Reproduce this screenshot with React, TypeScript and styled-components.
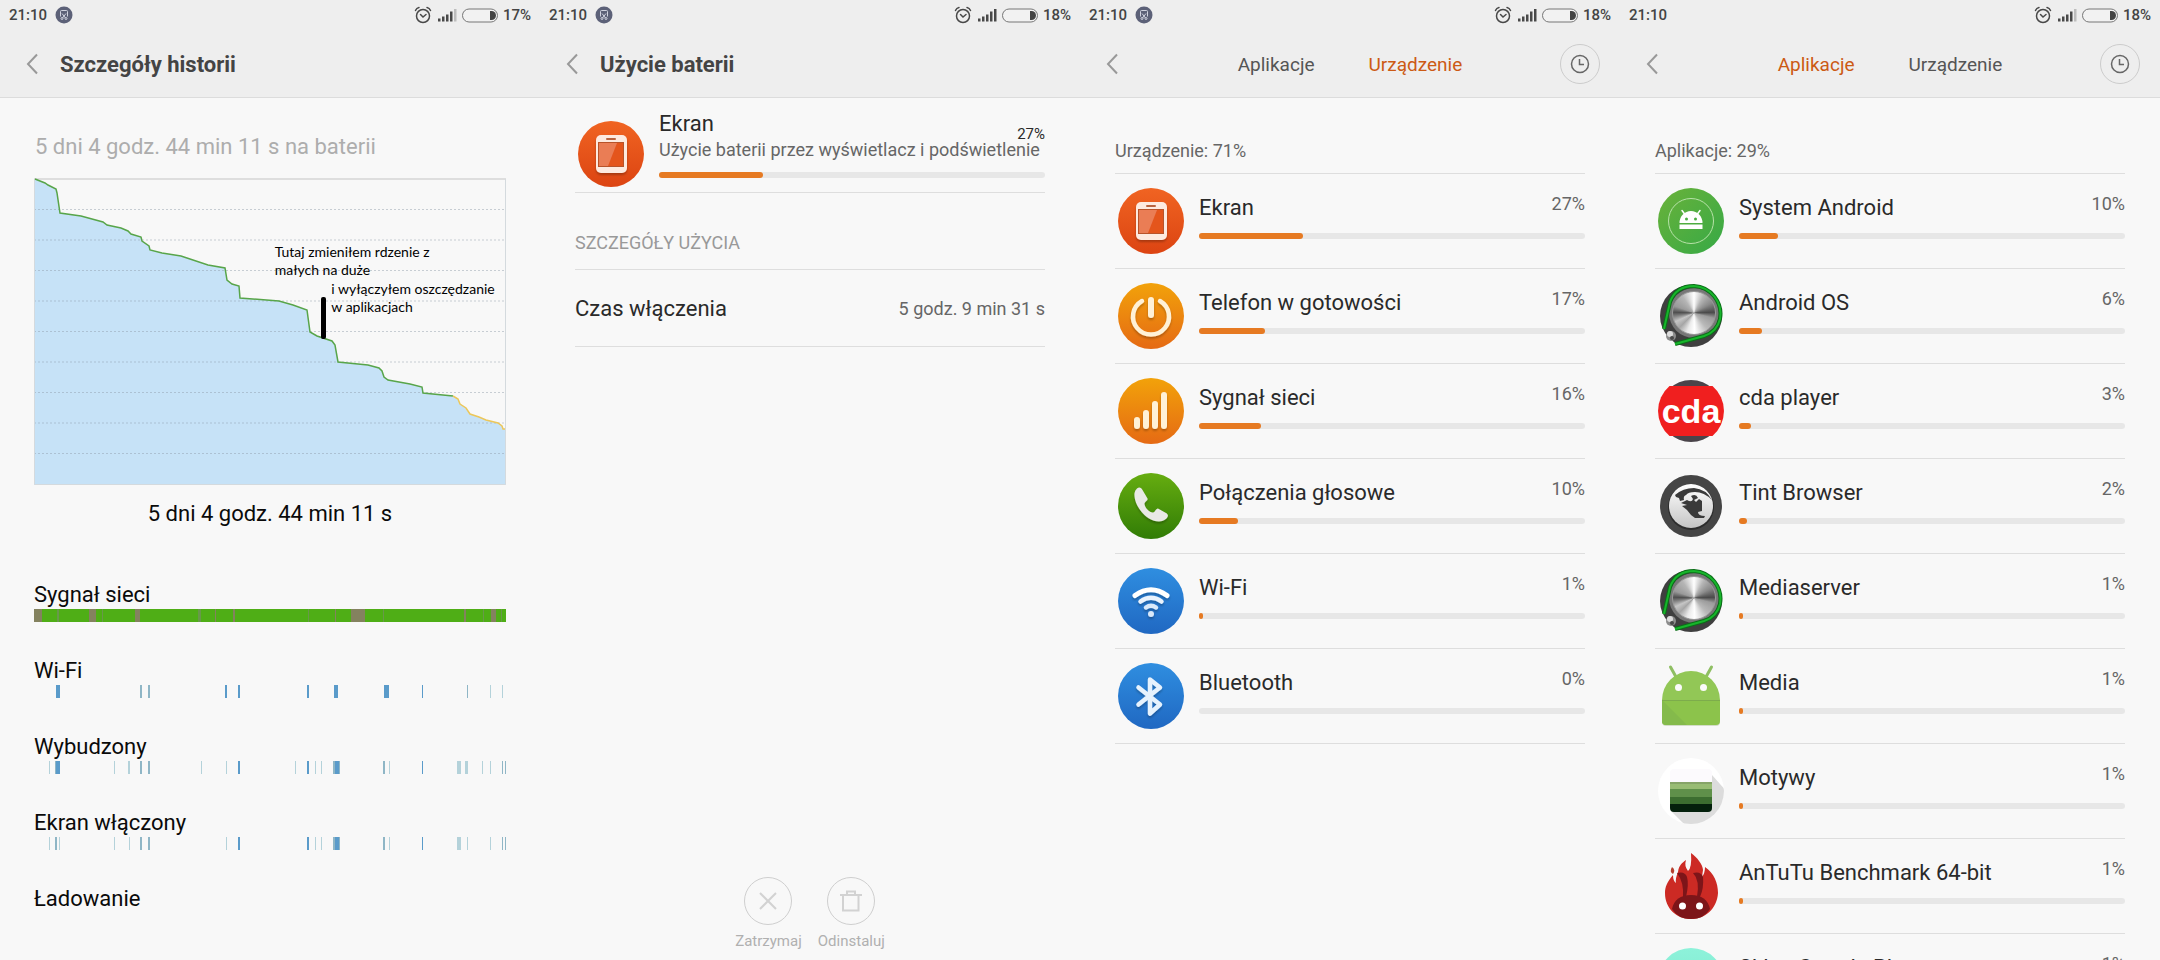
import React from "react";
import styled, { createGlobalStyle } from "styled-components";

const GlobalStyle = createGlobalStyle`
  *, *::before, *::after { box-sizing: border-box; }
  body {
    margin: 0;
    background: #f8f8f8;
    font-family: Roboto, "Noto Sans", sans-serif;
    color: #2a2a2a;
  }
  h1, h2, h3, p, ul, dl, dd, dt, figure { margin: 0; padding: 0; font-weight: 400; }
  button { font: inherit; color: inherit; background: none; border: 0; padding: 0; margin: 0; }
`;

/* ---------- layout ---------- */

const Board = styled.main`
  display: grid;
  grid-template-columns: repeat(4, minmax(0, 1fr));
  height: 100vh;
  overflow: hidden;
`;

const Screen = styled.section`
  display: flex;
  flex-direction: column;
  min-width: 0;
  min-height: 0;
  overflow: hidden;
  background: #f8f8f8;
`;

const Header = styled.header`
  flex: none;
  background: #eeeeee;
  border-bottom: 1px solid #dcdcdc;
`;

const StatusBar = styled.div`
  display: flex;
  align-items: center;
  height: 30px;
  padding: 0 9px;
  font-size: 15px;
  font-weight: 500;
  line-height: 20px;
  color: #444;
`;

const Clock = styled.time`
  margin-right: 8px;
`;

const StatusIcons = styled.div`
  display: flex;
  align-items: center;
  gap: 5px;
  margin-left: auto;
`;

const TitleBar = styled.div`
  display: flex;
  align-items: center;
  height: 67px;
  padding: 0 20px;
`;

const BackButton = styled.button`
  flex: none;
  display: flex;
  width: 24px;
  height: 24px;
`;

const Title = styled.h1`
  margin-left: 16px;
  padding-top: 2px;
  font-size: 22px;
  line-height: 28px;
  font-weight: 700;
  color: #444;
`;

const Tabs = styled.nav`
  flex: 1;
  display: flex;
  justify-content: center;
  gap: 54px;
`;

const Tab = styled.button<{ $active?: boolean }>`
  padding-top: 2px;
  font-size: 19px;
  line-height: 28px;
  color: ${(p) => (p.$active ? "#cc5a14" : "#555")};
`;

const HistoryButton = styled.button`
  flex: none;
  display: flex;
  align-items: center;
  justify-content: center;
  width: 40px;
  height: 40px;
  margin-left: -16px;
  border: 1px solid #cccccc;
  border-radius: 50%;
  color: #666;
`;

const Content = styled.div`
  flex: 1;
  min-height: 0;
  display: flex;
  flex-direction: column;
  padding: 0 35px;
`;

/* ---------- history ---------- */

const Duration = styled.h2`
  margin-top: 35px;
  font-size: 22px;
  line-height: 28px;
  color: #adadad;
`;

const ChartBox = styled.figure`
  position: relative;
  margin: 17px -1px 0;
  svg { display: block; width: 100%; height: auto; }
`;

const ChartNote = styled.p<{ $x: number; $y: number }>`
  position: absolute;
  left: ${(p) => p.$x}%;
  top: ${(p) => p.$y}%;
  padding-top: 1px;
  font-family: Lato, sans-serif;
  font-size: 14px;
  line-height: 18px;
  color: #000;
  white-space: pre-line;
`;

const Caption = styled.p`
  margin-top: 15px;
  font-size: 22px;
  line-height: 28px;
  text-align: center;
  color: #0a0a0a;
`;

const Timelines = styled.div`
  margin-top: 53px;
`;

const Timeline = styled.div`
  height: 76px;
  margin: 0 -1px;
  h3 {
    font-size: 22px;
    line-height: 28px;
    color: #0a0a0a;
  }
  svg { display: block; width: 100%; height: 13px; }
`;

/* ---------- usage details ---------- */

const Summary = styled.div`
  display: flex;
  align-items: flex-start;
  gap: 15px;
  height: 95px;
  padding-left: 3px;
  border-bottom: 1px solid #dedede;
`;

const SummaryIcon = styled.div`
  flex: none;
  margin-top: 23px;
`;

const SummaryBody = styled.div`
  flex: 1;
  min-width: 0;
  padding-top: 12px;
`;

const SummaryHead = styled.div`
  display: flex;
  align-items: flex-start;
  justify-content: space-between;
  height: 28px;
  white-space: nowrap;
  h2 { font-size: 22px; line-height: 28px; }
  span { margin-top: 14px; font-size: 15px; line-height: 20px; }
`;

const SummaryText = styled.p`
  margin-bottom: 10px;
  font-size: 18px;
  line-height: 24px;
  color: #666;
  white-space: nowrap;
`;

const SectionTitle = styled.h2`
  padding: 38px 0 14px;
  font-size: 18px;
  line-height: 24px;
  color: #999;
  border-bottom: 1px solid #dedede;
`;

const Detail = styled.dl`
  display: flex;
  align-items: center;
  justify-content: space-between;
  height: 77px;
  padding-top: 2px;
  border-bottom: 1px solid #dedede;
  dt { font-size: 22px; line-height: 28px; }
  dd { font-size: 18px; line-height: 24px; color: #666; }
`;

const Actions = styled.footer`
  display: flex;
  justify-content: center;
  gap: 16px;
  margin-top: auto;
  padding-bottom: 9px;
`;

const Action = styled.button`
  display: flex;
  flex-direction: column;
  align-items: center;
  gap: 6px;
  font-size: 15px;
  line-height: 20px;
  color: #b0b0b0;
`;

const ActionCircle = styled.span`
  display: flex;
  align-items: center;
  justify-content: center;
  width: 48px;
  height: 48px;
  border: 1px solid #cfcfcf;
  border-radius: 50%;
  color: #d2d2d2;
`;

/* ---------- consumer list ---------- */

const Total = styled.h2`
  flex: none;
  padding: 41px 0 10px;
  font-size: 18px;
  line-height: 24px;
  color: #666;
  border-bottom: 1px solid #dedede;
`;

const List = styled.ul`
  list-style: none;
`;

const Row = styled.li`
  display: flex;
  align-items: center;
  gap: 15px;
  height: 95px;
  padding-left: 3px;
  border-bottom: 1px solid #dedede;
`;

const RowBody = styled.div`
  flex: 1;
  min-width: 0;
  align-self: flex-start;
  padding-top: 18px;
`;

const RowHead = styled.div`
  display: flex;
  justify-content: space-between;
  align-items: flex-start;
  margin-bottom: 11px;
`;

const Name = styled.h3`
  padding-top: 2px;
  font-size: 22px;
  line-height: 28px;
`;

const Percent = styled.span`
  font-size: 18px;
  line-height: 24px;
  color: #666;
`;

const Track = styled.div`
  height: 6px;
  border-radius: 3px;
  background: #e7e7e7;
`;

const Fill = styled.div`
  height: 6px;
  border-radius: 3px;
  background: #e67a22;
`;

const IconBox = styled.div`
  position: relative;
  flex: none;
  width: 66px;
  height: 66px;
  svg { display: block; }
`;

const KnobFace = styled.div`
  position: absolute;
  left: 14px;
  top: 8px;
  width: 44px;
  height: 44px;
  border-radius: 50%;
  border: 1px solid #9a9a9a;
  background: conic-gradient(
    #fff 0deg, #b5b5b5 30deg, #8a8a8a 60deg, #4a4a4a 88deg, #9c9c9c 105deg, #b9b9b9 140deg,
    #fff 178deg, #e9e9e9 200deg, #a6a6a6 225deg, #c6c6c6 245deg, #4f4f4f 272deg,
    #9a9a9a 290deg, #b5b5b5 325deg, #fff 360deg
  );
`;

/* ---------- icons ---------- */

const Disc = ({ id, from, to, children }: { id: string; from: string; to: string; children?: React.ReactNode }) => (
  <svg width="66" height="66" viewBox="0 0 66 66" aria-hidden="true">
    <defs>
      <linearGradient id={id} x1="0" y1="0" x2="0" y2="1">
        <stop offset="0" stopColor={from} />
        <stop offset="1" stopColor={to} />
      </linearGradient>
      <filter id={id + "-shadow"} x="-20%" y="-20%" width="140%" height="150%">
        <feDropShadow dx="0" dy="2" stdDeviation="1" floodColor="#000" floodOpacity="0.25" />
      </filter>
    </defs>
    <circle cx="33" cy="33" r="33" fill={`url(#${id})`} />
    <g filter={`url(#${id}-shadow)`}>{children}</g>
  </svg>
);

const ScreenIcon = ({ id }: { id: string }) => (
  <Disc id={id} from="#f06422" to="#dc4412">
    <rect x="18" y="14" width="31" height="38" rx="5" fill="#fdeae0" />
    <rect x="28" y="17" width="10" height="2" rx="1" fill="#b8633f" />
    <rect x="20.500" y="21.500" width="25" height="24" fill="#e4551f" stroke="#b8532c" />
    <path d="M21 22h18l-9 23h-9z" fill="#ea7d55" />
  </Disc>
);

const PowerIcon = () => (
  <Disc id="power" from="#f2a20a" to="#e56a14">
    <path d="M24 18A18 18 0 1 0 42 18" fill="none" stroke="#fff1d6" strokeWidth="4.500" strokeLinecap="round" />
    <path d="M33 17v15" stroke="#fff1d6" strokeWidth="6" strokeLinecap="round" />
  </Disc>
);

const SignalIcon = () => (
  <Disc id="signal" from="#f2a20a" to="#e56a14">
    <path d="M19 42V48M28 35V48M37 26V48M46 17V48" stroke="#fff1d6" strokeWidth="6" strokeLinecap="round" />
  </Disc>
);

const CallIcon = () => (
  <Disc id="call" from="#66ad10" to="#317c06">
    <path
      d="M19 15.500C21 13.500 23.500 14.500 24.500 17l5 8.500c1 2-3 3-3 5 0 4 5 9 8.500 9 2 0 3-4.500 5-4l8 4.500c2.500 1.500 2.500 3.500.5 5.500C44 50 37 49 31 45.500 22 40 15.500 28 16.500 20q.5-3 2.500-4.500z"
      fill="#e9e9e6"
    />
  </Disc>
);

const WifiIcon = () => (
  <Disc id="wifi" from="#2f8ee0" to="#2068c2">
    <g fill="none" strokeLinecap="round">
      <path d="M17 27.500Q33 16 49 27.500" stroke="#fff" strokeWidth="5" />
      <path d="M22.500 33.500Q33 26 43.500 33.500" stroke="#eaf3fd" strokeWidth="4.500" />
      <path d="M28 39.500Q33 36 38 39.500" stroke="#d9e9fa" strokeWidth="4.500" />
    </g>
    <circle cx="33" cy="46" r="3" fill="#d9e9fa" />
  </Disc>
);

const BluetoothIcon = () => (
  <Disc id="bluetooth" from="#2f8ee0" to="#2068c2">
    <path d="M20.500 24.500L42 41.500L32 50.500V16.500L42 24.500L20.500 41.500" fill="none" stroke="#e6f2fd" strokeWidth="4.500" strokeLinecap="round" strokeLinejoin="round" />
  </Disc>
);

const AndroidSystemIcon = () => (
  <svg width="66" height="66" viewBox="0 0 66 66" aria-hidden="true">
    <defs>
      <linearGradient id="sys" x1="0" y1="0" x2="1" y2="1">
        <stop offset="0" stopColor="#6ab23a" />
        <stop offset="1" stopColor="#36a946" />
      </linearGradient>
    </defs>
    <circle cx="33" cy="33" r="33" fill="url(#sys)" />
    <circle cx="33" cy="33" r="22.500" fill="none" stroke="#b7e2a8" />
    <path d="M21.500 35a11.500 12 0 0 1 23 0zM21.500 36.500h23V41h-23z" fill="#fff" />
    <path d="M24 22.500l3 4M42 22.500l-3 4" stroke="#fff" strokeWidth="1.500" strokeLinecap="round" />
    <circle cx="28.500" cy="31" r="1.500" fill="#4bad42" />
    <circle cx="37.500" cy="31" r="1.500" fill="#4bad42" />
  </svg>
);

const BELT = "M6 46L12 19Q18 3 36 3A28 28 0 0 1 62 36Q59 49 46 53L17 61";

const KnobIcon = () => (
  <>
    <svg width="66" height="66" viewBox="0 0 66 66" aria-hidden="true">
      <circle cx="33" cy="33" r="31" fill="#3f3f3f" />
      <circle cx="36" cy="30" r="25" fill="#777" />
      <path d={BELT} fill="none" stroke="#0b6f18" strokeWidth="4" />
      <path d={BELT} fill="none" stroke="#17b52b" strokeWidth="2" />
      <circle cx="13" cy="53" r="5" fill="#8d8d8d" />
      <circle cx="12" cy="51" r="3" fill="#dcdcdc" />
      <circle cx="14" cy="55" r="2" fill="#4a4a4a" />
    </svg>
    <KnobFace />
  </>
);

const CdaIcon = () => (
  <svg width="66" height="66" viewBox="0 0 66 66" aria-hidden="true">
    <circle cx="33" cy="33" r="31" fill="#4a444a" />
    <path d="M11.500 8h43A33 33 0 0 1 54.500 58h-43A33 33 0 0 1 11.500 8z" fill="#f01f1f" />
    <text x="33" y="45" textAnchor="middle" fontFamily="Liberation Sans, sans-serif" fontWeight="700" fontSize="34" fill="#fff">cda</text>
  </svg>
);

const TintIcon = () => (
  <svg width="66" height="66" viewBox="0 0 66 66" aria-hidden="true">
    <defs>
      <linearGradient id="tint" x1="0" y1="0" x2="0" y2="1">
        <stop offset="0" stopColor="#ffffff" />
        <stop offset="1" stopColor="#c4c4c4" />
      </linearGradient>
    </defs>
    <circle cx="33" cy="33" r="31" fill="#454545" />
    <circle cx="33" cy="34" r="23" fill="#2c2c2c" />
    <circle cx="33" cy="33" r="22" fill="url(#tint)" />
    <path d="M17 22Q25 15 36 15Q48 16 54 27Q46 19 37 19Q30 19 28 22Q25 23 26 27L22 28L21 25L18 24z" fill="#3a3a3a" />
    <path d="M33 23Q38 20 40 25L36 27L38 29L41 26L44 28V38L40 39Q40 43 47 43L46 45H37L33 42L29 37L24 33L29 32L23 30L29 27Q34 30 35 26z" fill="#3a3a3a" />
  </svg>
);

const AndroidIcon = () => (
  <svg width="66" height="66" viewBox="0 0 66 66" aria-hidden="true">
    <path d="M12.500 4l5 9M53.500 4l-5 9" stroke="#8fbf63" strokeWidth="3" strokeLinecap="round" />
    <path d="M4 39h58v20q0 4-4 4H8q-4 0-4-4z" fill="#d3dcc8" />
    <path d="M4 37a29 29 0 0 1 58 0z" fill="#92c756" />
    <path d="M4 37h58v21q0 4-4 4H8q-4 0-4-4z" fill="#8cc34b" />
    <path d="M4 37L29 62H8q-4 0-4-4z" fill="#84ba4b" />
    <path d="M4 37.500h58" stroke="#7dac4c" />
    <circle cx="20.500" cy="24.500" r="3.500" fill="#fafafa" />
    <circle cx="45.500" cy="24.500" r="3.500" fill="#fafafa" />
  </svg>
);

const ThemesIcon = () => (
  <svg width="66" height="66" viewBox="0 0 66 66" aria-hidden="true">
    <defs>
      <clipPath id="themes-disc"><circle cx="33" cy="33" r="33" /></clipPath>
      <clipPath id="themes-card"><rect x="12" y="11" width="42" height="43" rx="4" /></clipPath>
    </defs>
    <circle cx="33" cy="33" r="33" fill="#fff" />
    <path d="M54 17L70 35V70H30L13 53z" fill="#dcdcdc" clipPath="url(#themes-disc)" />
    <g clipPath="url(#themes-card)">
      <path d="M12 11h42v13H12z" fill="#fcfafd" />
      <path d="M12 24h42v8H12z" fill="#98bc74" />
      <path d="M12 24h42v2H12z" fill="#86a468" />
      <path d="M12 31h42v8H12z" fill="#5f904a" />
      <path d="M12 39h42v8H12z" fill="#3c6e30" />
      <path d="M12 46h42v8H12z" fill="#04200c" />
    </g>
  </svg>
);

const AntutuIcon = () => (
  <svg width="66" height="66" viewBox="0 0 66 66" aria-hidden="true">
    <path
      d="M33 66C19 66 7 56 7 40C7 34 9 29 15 22Q15 28 18 30Q17 26 20 19C21 12 24 10 28 7Q26 13 30 18Q34 15 33 0C39 4 45 12 45 17L44 24Q47 20 47 14C56 20 60 30 60 40C59 56 47 66 33 66z"
      fill="#cc2a24"
    />
    <path d="M14 14q4 3 1 7q-4-2-1-7z" fill="#b5402f" />
    <path d="M19 20Q27 18 29 24Q31 31 28 44H25Q26 29 19 20zM35 20Q43 18 45 24Q46 35 42 44H39Q42 27 35 20z" fill="#7d1519" />
    <path d="M14 56Q17 42 33 42Q49 42 52 56Q46 66 33 66Q20 66 14 56z" fill="#7d1519" />
    <circle cx="24.500" cy="53" r="3.500" fill="#fff" />
    <circle cx="41.500" cy="53" r="3.500" fill="#fff" />
  </svg>
);

const MintIcon = () => <Disc id="mint" from="#8df2da" to="#7de6cc" />;

const CaptureBadge = () => (
  <svg width="18" height="18" viewBox="0 0 18 18" aria-hidden="true">
    <circle cx="9" cy="9" r="8.500" fill="#5c6178" />
    <g fill="none" stroke="#cfd2de">
      <path d="M5.500 10.500V5.500q0-1 1-1h5q1 0 1 1v5" />
      <path d="M7 7.500l3.500 4.500M11 7.500L7.500 12" />
      <circle cx="7" cy="12.500" r="1" />
      <circle cx="11" cy="12.500" r="1" />
    </g>
  </svg>
);

const AlarmIcon = () => (
  <svg width="18" height="18" viewBox="0 0 18 18" fill="none" stroke="#484848" strokeWidth="1.500" strokeLinecap="round" aria-hidden="true">
    <circle cx="9" cy="10" r="6.500" />
    <path d="M6.500 8.500L9 11l3-2.500M1.500 4.500Q2.500 2 5 1.500M16.500 4.500Q15.500 2 13 1.500" />
  </svg>
);

const CellIcon = ({ weak }: { weak?: boolean }) => (
  <svg width="20" height="14" viewBox="0 0 20 14" aria-hidden="true">
    <path d="M1 10.500h2.500V13.500H1zM5 8.500h2.500v5H5zM9 6.500h2.500v7H9zM13 3.500h2.500v10H13z" fill="#484848" />
    <path d="M17 1h2.500v12.500H17z" fill={weak ? "#bdbdbd" : "#484848"} />
  </svg>
);

const BatteryIcon = () => (
  <svg width="36" height="15" viewBox="0 0 36 15" aria-hidden="true">
    <rect x="0.500" y="1" width="35" height="13" rx="6.500" fill="#f2f2f2" stroke="#777" />
    <path d="M28 3h1.500a4.500 4.500 0 0 1 0 9H28z" fill="#444" />
  </svg>
);

const ChevronIcon = () => (
  <svg width="24" height="24" viewBox="0 0 24 24" fill="none" stroke="#999" strokeWidth="2" aria-hidden="true">
    <path d="M17 2.500L8 12l9 9.500" />
  </svg>
);

const ClockIcon = () => (
  <svg width="20" height="20" viewBox="0 0 20 20" fill="none" stroke="currentColor" strokeWidth="1.500" aria-hidden="true">
    <circle cx="10" cy="10" r="8.500" />
    <path d="M9.500 5v5.500H14" />
  </svg>
);

const CrossIcon = () => (
  <svg width="20" height="20" viewBox="0 0 20 20" stroke="currentColor" strokeWidth="2" aria-hidden="true">
    <path d="M2 2l16 16M18 2L2 18" />
  </svg>
);

const TrashIcon = () => (
  <svg width="24" height="24" viewBox="0 0 24 24" fill="none" stroke="currentColor" strokeWidth="2" aria-hidden="true">
    <path d="M1 6h22M4 6v15.500h15.500V6M8 6V2.500h8V6" />
  </svg>
);

/* ---------- data ---------- */

const GREEN_LINE =
  "1,1 11,5 14,7 22,11 23,15 26,35 47,38 69,44 73,47 87,50 94,53 97,56 107,59 108,63 115,68 116,72 128,75 147,78 174,87 191,90 193,102 198,106 205,108 206,120 245,123 259,127 273,132 276,154 283,158 298,163 301,167 304,184 334,187 345,190 348,193 350,199 354,202 376,206 388,209 389,215 419,218";
const YELLOW_LINE = "419,218 424,221 426,226 432,230 436,236 445,239 452,242 464,245 468,248 469,251 471,251";

type Mark = [x: number, width: number, tone: string];
const STRONG = "#5a9bca";
const MID = "#8fb6c6";
const PALE = "#b4d2da";
const GREY = "#84825f";
const DIM = "#68994a";

const TIMELINES: { label: string; base?: string; marks: Mark[] }[] = [
  {
    label: "Sygnał sieci",
    base: "#4fae16",
    marks: [
      [0, 8, GREY], [23, 2, DIM], [55, 7, GREY], [68, 1, DIM], [101, 5, GREY], [164, 3, DIM], [181, 1, GREY],
      [199, 2, GREY], [274, 1, DIM], [301, 1, GREY], [317, 14, GREY], [349, 1, DIM], [430, 2, GREY],
      [449, 1, DIM], [457, 5, GREY], [467, 1, DIM],
    ],
  },
  {
    label: "Wi-Fi",
    marks: [
      [22, 4, STRONG], [106, 2, MID], [114, 2, MID], [191, 2, STRONG], [204, 2, STRONG], [273, 2, STRONG],
      [300, 4, STRONG], [350, 5, STRONG], [388, 1, STRONG], [433, 1, MID], [456, 1, PALE], [468, 1, PALE],
    ],
  },
  {
    label: "Wybudzony",
    marks: [
      [15, 1, PALE], [21, 2, MID], [22, 4, STRONG], [80, 1, PALE], [94, 2, PALE], [106, 2, MID], [114, 2, MID],
      [167, 1, PALE], [192, 1, PALE], [204, 2, STRONG], [261, 1, PALE], [273, 2, STRONG], [281, 1, PALE],
      [287, 1, PALE], [299, 7, MID], [301, 4, STRONG], [349, 2, MID], [355, 1, PALE], [388, 1, STRONG],
      [423, 4, PALE], [431, 3, PALE], [448, 1, PALE], [456, 1, PALE], [468, 1, MID], [471, 1, MID],
    ],
  },
  {
    label: "Ekran włączony",
    marks: [
      [15, 1, PALE], [21, 2, MID], [25, 1, PALE], [80, 1, PALE], [95, 1, PALE], [106, 2, MID], [114, 2, MID],
      [192, 1, PALE], [204, 2, STRONG], [273, 2, STRONG], [281, 1, PALE], [287, 1, PALE], [299, 7, MID],
      [301, 4, STRONG], [349, 2, MID], [355, 1, PALE], [388, 1, STRONG], [423, 4, PALE], [433, 1, PALE],
      [456, 1, PALE], [468, 1, MID], [471, 1, MID],
    ],
  },
  { label: "Ładowanie", marks: [] },
];

type Item = { name: string; percent: number; icon: React.ReactNode };

const DEVICE: Item[] = [
  { name: "Ekran", percent: 27, icon: <ScreenIcon id="screen" /> },
  { name: "Telefon w gotowości", percent: 17, icon: <PowerIcon /> },
  { name: "Sygnał sieci", percent: 16, icon: <SignalIcon /> },
  { name: "Połączenia głosowe", percent: 10, icon: <CallIcon /> },
  { name: "Wi-Fi", percent: 1, icon: <WifiIcon /> },
  { name: "Bluetooth", percent: 0, icon: <BluetoothIcon /> },
];

const APPS: Item[] = [
  { name: "System Android", percent: 10, icon: <AndroidSystemIcon /> },
  { name: "Android OS", percent: 6, icon: <KnobIcon /> },
  { name: "cda player", percent: 3, icon: <CdaIcon /> },
  { name: "Tint Browser", percent: 2, icon: <TintIcon /> },
  { name: "Mediaserver", percent: 1, icon: <KnobIcon /> },
  { name: "Media", percent: 1, icon: <AndroidIcon /> },
  { name: "Motywy", percent: 1, icon: <ThemesIcon /> },
  { name: "AnTuTu Benchmark 64-bit", percent: 1, icon: <AntutuIcon /> },
  { name: "Sklep Google Play", percent: 1, icon: <MintIcon /> },
];

/* ---------- parts ---------- */

const Status = ({ battery, weak, badge = true }: { battery: number; weak?: boolean; badge?: boolean }) => (
  <StatusBar>
    <Clock>21:10</Clock>
    {badge && <CaptureBadge />}
    <StatusIcons>
      <AlarmIcon />
      <CellIcon weak={weak} />
      <BatteryIcon />
      <span>{battery}%</span>
    </StatusIcons>
  </StatusBar>
);

const Back = () => (
  <BackButton aria-label="Wstecz">
    <ChevronIcon />
  </BackButton>
);

const TabHeader = ({ active, badge, weak }: { active: string; badge?: boolean; weak?: boolean }) => (
  <Header>
    <Status battery={18} badge={badge} weak={weak} />
    <TitleBar>
      <Back />
      <Tabs>
        {["Aplikacje", "Urządzenie"].map((t) => (
          <Tab key={t} $active={t === active}>{t}</Tab>
        ))}
      </Tabs>
      <HistoryButton aria-label="Historia">
        <ClockIcon />
      </HistoryButton>
    </TitleBar>
  </Header>
);

const Bar = ({ value }: { value: number }) => (
  <Track role="progressbar" aria-valuenow={value} aria-valuemin={0} aria-valuemax={100}>
    <Fill style={{ width: `${value}%` }} />
  </Track>
);

const Consumers = ({ items }: { items: Item[] }) => (
  <List>
    {items.map((it) => (
      <Row key={it.name}>
        <IconBox>{it.icon}</IconBox>
        <RowBody>
          <RowHead>
            <Name>{it.name}</Name>
            <Percent>{it.percent}%</Percent>
          </RowHead>
          <Bar value={it.percent} />
        </RowBody>
      </Row>
    ))}
  </List>
);

const BatteryChart = () => (
  <ChartBox>
    <svg viewBox="0 0 472 307" role="img" aria-label="Poziom baterii">
      <polygon points={`0,0 ${GREEN_LINE} ${YELLOW_LINE} 472,251 472,307 0,307`} fill="#c6e2f7" />
      {Array.from({ length: 9 }, (_, i) => (
        <line key={i} x1="0" x2="471" y1={31.5 + i * 30.5} y2={31.5 + i * 30.5} stroke="#8c9aa6" strokeOpacity="0.45" strokeDasharray="2 2" />
      ))}
      <path d="M0 1H472" stroke="#dedede" strokeWidth="2" />
      <path d="M0.500 1V306.500H471.500V1" fill="none" stroke="#d4dade" />
      <polyline points={GREEN_LINE} fill="none" stroke="#58a54a" strokeWidth="1.500" />
      <polyline points={YELLOW_LINE} fill="none" stroke="#ecc75a" strokeWidth="1.500" />
      <rect x="287" y="119" width="5" height="42" rx="2" fill="#000" />
    </svg>
    <ChartNote $x={51} $y={21}>{"Tutaj zmieniłem rdzenie z\nmałych na duże"}</ChartNote>
    <ChartNote $x={63} $y={33}>{"i wyłączyłem oszczędzanie\nw aplikacjach"}</ChartNote>
  </ChartBox>
);

export default function App() {
  return (
    <>
      <GlobalStyle />
      <Board>
        <Screen>
          <Header>
            <Status battery={17} weak />
            <TitleBar>
              <Back />
              <Title>Szczegóły historii</Title>
            </TitleBar>
          </Header>
          <Content>
            <Duration>5 dni 4 godz. 44 min 11 s na baterii</Duration>
            <BatteryChart />
            <Caption>5 dni 4 godz. 44 min 11 s</Caption>
            <Timelines>
              {TIMELINES.map((t) => (
                <Timeline key={t.label}>
                  <h3>{t.label}</h3>
                  <svg viewBox="0 0 472 13" preserveAspectRatio="none" aria-hidden="true">
                    {t.base && <rect width="472" height="13" fill={t.base} />}
                    {t.marks.map(([x, w, tone], i) => (
                      <rect key={i} x={x} y="0" width={w} height="13" fill={tone} />
                    ))}
                  </svg>
                </Timeline>
              ))}
            </Timelines>
          </Content>
        </Screen>

        <Screen>
          <Header>
            <Status battery={18} />
            <TitleBar>
              <Back />
              <Title>Użycie baterii</Title>
            </TitleBar>
          </Header>
          <Content>
            <Summary>
              <SummaryIcon>
                <IconBox><ScreenIcon id="screen-summary" /></IconBox>
              </SummaryIcon>
              <SummaryBody>
                <SummaryHead>
                  <h2>Ekran</h2>
                  <span>27%</span>
                </SummaryHead>
                <SummaryText>Użycie baterii przez wyświetlacz i podświetlenie</SummaryText>
                <Bar value={27} />
              </SummaryBody>
            </Summary>
            <SectionTitle>SZCZEGÓŁY UŻYCIA</SectionTitle>
            <Detail>
              <dt>Czas włączenia</dt>
              <dd>5 godz. 9 min 31 s</dd>
            </Detail>
            <Actions>
              <Action>
                <ActionCircle><CrossIcon /></ActionCircle>
                Zatrzymaj
              </Action>
              <Action>
                <ActionCircle><TrashIcon /></ActionCircle>
                Odinstaluj
              </Action>
            </Actions>
          </Content>
        </Screen>

        <Screen>
          <TabHeader active="Urządzenie" />
          <Content>
            <Total>Urządzenie: 71%</Total>
            <Consumers items={DEVICE} />
          </Content>
        </Screen>

        <Screen>
          <TabHeader active="Aplikacje" badge={false} weak />
          <Content>
            <Total>Aplikacje: 29%</Total>
            <Consumers items={APPS} />
          </Content>
        </Screen>
      </Board>
    </>
  );
}
